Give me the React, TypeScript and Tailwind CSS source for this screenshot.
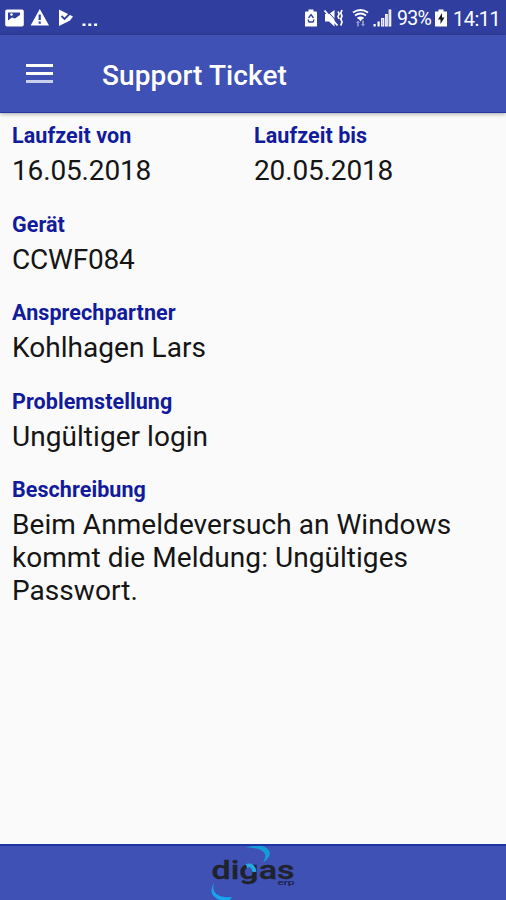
import type { ReactNode } from "react";

export default function App() {
  return (
    <div className="flex h-[900px] w-[506px] flex-col overflow-hidden bg-[#fafafa] font-['Roboto',sans-serif]">
      <StatusBar />
      <header className="z-10 flex h-[78px] shrink-0 items-center border-b border-[#2139a0] bg-[#3f51b5] pl-[26px] shadow-[0_1px_4px_rgba(0,0,0,0.35)]">
        <button aria-label="Menu" className="flex w-[27px] flex-col gap-[5px]">
          <span className="h-[3px] bg-white" />
          <span className="h-[3px] bg-white" />
          <span className="h-[3px] bg-[#c9cfee]" />
        </button>
        <h1 className="ml-[49px] pt-[5px] text-[28px] font-medium leading-8 tracking-[0.1px] text-white">Support Ticket</h1>
      </header>

      <main className="flex flex-1 flex-col gap-[24.6px] px-3 pt-[10px]">
        <div className="flex">
          <Field label="Laufzeit von" className="w-[242px] tracking-[-0.15px]">
            16.05.2018
          </Field>
          <Field label="Laufzeit bis" className="tracking-[-0.15px]">
            20.05.2018
          </Field>
        </div>
        <Field label="Gerät" className="tracking-[-0.2px]">
          CCWF084
        </Field>
        <Field label="Ansprechpartner">Kohlhagen Lars</Field>
        <Field label="Problemstellung">Ungültiger login</Field>
        <Field label="Beschreibung">
          Beim Anmeldeversuch an Windows
          <br />
          kommt die Meldung: Ungültiges
          <br />
          Passwort.
        </Field>
      </main>

      <footer className="flex h-14 shrink-0 justify-center border-t-2 border-[#1e35a4] bg-[#3f51b5]">
        <Logo />
      </footer>
    </div>
  );
}

type FieldProps = { label: string; className?: string; children: ReactNode };

function Field({ label, className = "tracking-[0.05px]", children }: FieldProps) {
  return (
    <div className={className}>
      <div className="text-[21.5px] font-bold leading-[26px] tracking-[0.07px] text-[#111b9c]">{label}</div>
      <div className="mt-[5px] whitespace-nowrap text-[28px] leading-[33px] text-[#151515]">{children}</div>
    </div>
  );
}

function StatusBar() {
  return (
    <div className="flex h-[35px] shrink-0 items-center bg-[#303f9f] text-white">
      <svg className="h-[35px] w-[105px]" viewBox="0 0 105 35" fill="currentColor">
        <path
          fillRule="evenodd"
          d="M7 9.5h15a1.8 1.8 0 0 1 1.8 1.8v13.4a1.8 1.8 0 0 1-1.8 1.8H7a1.8 1.8 0 0 1-1.8-1.8V11.3A1.8 1.8 0 0 1 7 9.5ZM8 12.5v8l4-3 3 1 5-3.5v-2.5Z"
        />
        <circle cx="11.5" cy="14.5" r="1.3" />
        <path fillRule="evenodd" d="M39.8 9 49 25.5H30.6ZM38.6 14.500v5.500h2.200v-5.500Zm0 7v2.200h2.200v-2.200Z" />
        <path d="M59 9.5 73 16.5 70 20.5 59 26Z" />
        <path d="m61.500 16 3 3 6-6" fill="none" stroke="#303f9f" strokeWidth="1.8" />
        <path d="M82.5 23.5h3v2.5h-3Zm5.8 0h3v2.5h-3Zm5.8 0h3v2.5h-3Z" />
      </svg>
      <svg className="ml-[195px] h-[35px] w-[96px]" viewBox="300 0 96 35" fill="currentColor">
        <path d="M308.5 9.5h5v2h2.5a1 1 0 0 1 1 1v14h-12v-14a1 1 0 0 1 1-1h2.5Z" />
        <path
          d="m308.5 18 2.500-3.500 2.500 3.500M308 19.500l1 2.500h4l1-2.500"
          fill="none"
          stroke="#303f9f"
          strokeWidth="1.3"
        />
        <path d="M325 14h4l5.500-4v16.500l-5.500-5h-4Z" />
        <path d="m326.500 10 13 14.500" stroke="#303f9f" strokeWidth="1" />
        <path d="m324.500 10.500 13 15" stroke="currentColor" strokeWidth="1.8" />
        <path
          d="m338 11.500 1.200 2.500-1.200 2.500 1.200 2.500m2.800-9-1.200 3 1.200 3-1.200 3 1.200 3-1.200 3.500"
          fill="none"
          stroke="currentColor"
          strokeWidth="1.7"
        />
        <g fill="none" stroke="currentColor" strokeWidth="2">
          <path d="M353 12.500q7.500-5 15 0" />
          <path d="M355 15.500q5.500-4 11 0" />
          <path d="M357.500 18.500q3-2 6 0" />
        </g>
        <path d="m358 18 2.500 3.500L363 18Z" />
        <path d="m356 23 2-2.500 2 2.500h-1.200v3.500h-1.600V23Zm5 1h1.200v-3.500h1.600V24h1.200l-2 2.500Z" opacity=".5" />
        <path d="M373.500 24h2.200v2.500h-2.200Zm4-2.500h2.200v5h-2.200Z" />
        <g fill="#7f8bd0" stroke="currentColor" strokeWidth="1.2">
          <path d="M381.700 26v-7.500h2V26ZM385.700 26V14.500h1.500V26ZM389.200 26V10h1.500v16Z" />
        </g>
      </svg>
      <span className="ml-[1px] w-[38px] whitespace-nowrap pt-[3px] text-[19.5px] leading-6 tracking-[-0.7px]">93%</span>
      <svg className="h-[35px] w-[12px]" viewBox="0 0 12 35" fill="currentColor">
        <path d="M3.500 9.500h5v2H12v15H0v-15h3.500Z" />
        <path d="m7 13-4 6.500h2.500V24L9.500 17.500H7Z" fill="#111625" />
      </svg>
      <span className="ml-[6px] whitespace-nowrap pt-[3px] text-[20px] leading-6 tracking-[-0.5px]">14:11</span>
    </div>
  );
}

function Logo() {
  return (
    <svg className="h-[54px] w-[110px]" viewBox="198 846 110 54">
      <path d="M246 847.500q11-3 18-1 8 4 5 10-2 4-6 6 4-6 1-10-4-5-18-5Z" fill="#159bd9" />
      <path d="M214 883q-3 10 6 13 6 2 12 1l-2 3h-10q-13-5-6-17Z" fill="#18a5ed" />
      <text
        x="211.5"
        y="878.5"
        fontSize="26"
        fontWeight="500"
        fill="#20232c"
        stroke="#20232c"
        strokeWidth=".4"
        textLength="83"
        lengthAdjust="spacingAndGlyphs"
        className="font-['Roboto',sans-serif]"
      >
        digas
      </text>
      <path d="M246.500 866q7-2 8 6" fill="none" stroke="#24a9e4" strokeWidth="4" />
      <text
        x="277.5"
        y="885"
        fontSize="8"
        fill="#1b2147"
        stroke="#1b2147"
        strokeWidth=".2"
        textLength="17"
        lengthAdjust="spacingAndGlyphs"
        className="font-['Roboto',sans-serif]"
      >
        erp
      </text>
    </svg>
  );
}
